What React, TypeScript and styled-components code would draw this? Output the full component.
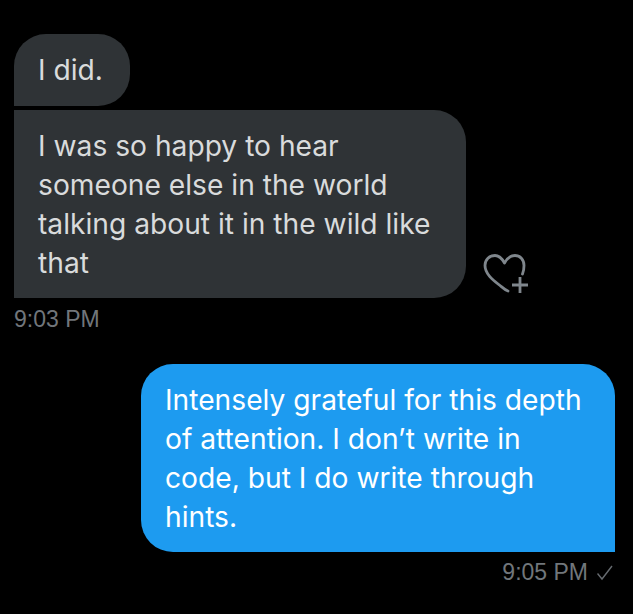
import { createGlobalStyle, styled } from "styled-components";

const GlobalStyle = createGlobalStyle`
  html, body {
    margin: 0;
    background: #000;
  }
`;

const Page = styled.main`
  width: 633px;
  height: 614px;
  box-sizing: border-box;
  padding: 34px 18px 0 14px;
  display: flex;
  flex-direction: column;
  background: #000;
  overflow: hidden;
`;

const ReceivedGroup = styled.section`
  display: flex;
  flex-direction: column;
  align-items: flex-start;
  gap: 4px;
`;

const SentGroup = styled.section`
  display: flex;
  flex-direction: column;
  align-items: flex-end;
  gap: 8px;
  margin-top: 33px;
`;

const Row = styled.div`
  display: flex;
  align-items: flex-end;
`;

const Bubble = styled.div<{ $sent?: boolean; $first?: boolean; $width: number }>`
  box-sizing: border-box;
  width: ${({ $width }) => $width}px;
  padding: 17px 24px ${({ $first }) => ($first ? 16 : 15)}px;
  background: ${({ $sent }) => ($sent ? "#1d9bf0" : "#2f3336")};
  color: ${({ $sent }) => ($sent ? "#fff" : "#d9dbdc")};
  font-family: Inter, "Liberation Sans", sans-serif;
  font-size: 28.2px;
  line-height: 39px;
  border-radius: ${({ $sent, $first }) =>
    $sent ? "32px 32px 0 32px" : $first ? "32px 32px 32px 0" : "0 32px 32px 0"};
`;

const Line = styled.span`
  display: block;
  white-space: nowrap;
`;

const LikeButton = styled.svg`
  width: 46px;
  height: 46px;
  margin-left: 17px;
  color: #7f868c;
`;

const Meta = styled.div`
  display: flex;
  align-items: center;
  gap: 9px;
  font-family: "Liberation Sans", Arial, sans-serif;
  font-size: 23px;
  line-height: 24px;
  color: #71767b;
`;

const ReceivedMeta = styled(Meta)`
  margin-top: 5px;
`;

const Check = styled.svg`
  width: 18px;
  height: 19px;
  color: #666b70;
`;

export default function App() {
  return (
    <>
      <GlobalStyle />
      <Page>
        <ReceivedGroup>
          <Bubble $first $width={116}>
            <Line>I did.</Line>
          </Bubble>
          <Row>
            <Bubble $width={452}>
              <Line>I was so happy to hear</Line>
              <Line>someone else in the world</Line>
              <Line>talking about it in the wild like</Line>
              <Line>that</Line>
            </Bubble>
            <LikeButton viewBox="0 0 46 46" fill="none" stroke="currentColor" strokeWidth="2.8" strokeLinecap="round" strokeLinejoin="round">
              <path d="M25 39 C 22 38, 20 36, 17 33.5 C 10 28, 2 22, 2 13.5 C 2 7.5, 6.5 3.5, 12 3.5 C 16 3.5, 19 6.5, 21.5 11 C 24 6.5, 27 3.5, 32 3.5 C 37 3.5, 41 7.5, 41 13.5 C 41 16.5, 40.5 19.5, 39.5 22" />
              <path d="M37 25 V41 M29 33 H45" strokeLinecap="butt" />
            </LikeButton>
          </Row>
          <ReceivedMeta>9:03 PM</ReceivedMeta>
        </ReceivedGroup>
        <SentGroup>
          <Bubble $sent $width={474}>
            <Line>Intensely grateful for this depth</Line>
            <Line>of attention. I don’t write in</Line>
            <Line>code, but I do write through</Line>
            <Line>hints.</Line>
          </Bubble>
          <Meta>
            9:05 PM
            <Check viewBox="0 0 18 19" fill="none" stroke="currentColor" strokeWidth="1.4">
              <path d="M0.5 10.5 L5 16 L15 3" />
            </Check>
          </Meta>
        </SentGroup>
      </Page>
    </>
  );
}
